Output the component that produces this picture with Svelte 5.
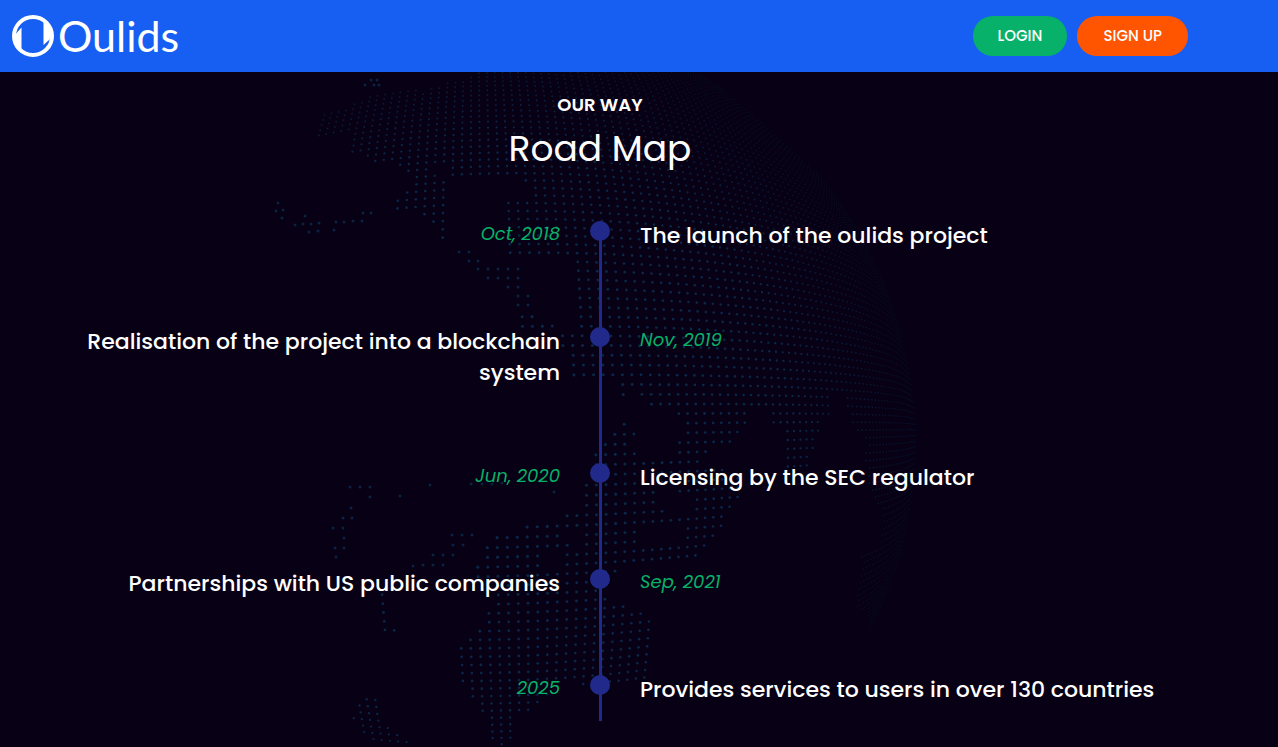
<script lang="ts">
  type Point = [number, number];

  const milestones = [
    { date: 'Oct, 2018', title: 'The launch of the oulids project' },
    { date: 'Nov, 2019', title: 'Realisation of the project into a blockchain system' },
    { date: 'Jun, 2020', title: 'Licensing by the SEC regulator' },
    { date: 'Sep, 2021', title: 'Partnerships with US public companies' },
    { date: '2025', title: 'Provides services to users in over 130 countries' },
  ];

  // ---- GLOBE ----
  const CENTER: Point = [495, 370];
  const RADIUS = 432;
  const SPACING = 10.2;
  const TILT = -0.022;

  // coastlines, in the coordinates of the globe drawing
  const land: Point[][] = [
    [
      [314, 59], [322, 43], [338, 36], [358, 31], [376, 20], [427, 18], [440, 12], [457, 8],
      [474, 5], [481, -4], [700, -4], [930, 200], [940, 400], [930, 500], [868, 566], [870, 530],
      [880, 473], [883, 440], [872, 425], [864, 386], [868, 367], [856, 361], [846, 334],
      [844, 322], [833, 322], [830, 343], [820, 350], [819, 362], [814, 379], [808, 400],
      [786, 400], [785, 359], [772, 350], [764, 337], [750, 333], [748, 350], [740, 361],
      [736, 371], [712, 375], [700, 396], [682, 396], [674, 382], [681, 356], [688, 345],
      [672, 342], [646, 334], [634, 322], [622, 325], [622, 336], [616, 336], [614, 312],
      [600, 308], [575, 314], [566, 292], [558, 262], [516, 262], [516, 240], [532, 240],
      [572, 260], [572, 220], [573, 142], [544, 140], [530, 125], [502, 124], [502, 128],
      [528, 128], [530, 110], [520, 108], [502, 107], [497, 101], [474, 106], [452, 106],
      [449, 95], [430, 96], [438, 102], [448, 108], [446, 164], [454, 167], [438, 168],
      [432, 152], [414, 138], [386, 137], [398, 124], [412, 113], [408, 104], [400, 94],
      [376, 92], [366, 86], [350, 82], [354, 58], [340, 60], [320, 67],
    ],
    [[502, 128], [575, 128], [575, 188], [562, 188], [546, 186], [516, 182], [502, 180]],
    [
      [618, 345], [634, 357], [634, 380], [645, 388], [682, 385], [710, 392], [745, 402],
      [738, 430], [725, 446], [717, 466], [702, 484], [652, 496], [606, 500], [600, 520],
      [620, 530], [638, 538], [655, 555], [654, 580], [643, 613], [610, 617], [564, 610],
      [540, 635], [514, 646], [512, 668], [502, 680], [490, 666], [490, 650], [478, 640],
      [468, 615], [457, 602], [456, 582], [468, 562], [484, 546], [494, 525], [482, 506],
      [450, 502], [484, 492], [482, 478], [500, 460], [552, 448], [584, 436], [588, 395],
      [600, 375], [612, 365],
    ],
    [[372, 514], [390, 514], [394, 556], [404, 564], [378, 566]],
    [[366, 620], [380, 622], [384, 648], [410, 673], [378, 673], [350, 648]],
    [[862, 482], [930, 450], [900, 540], [872, 570], [868, 536], [855, 538]],
  ];

  const lakes: Point[][] = [
    [[545, 480], [562, 474], [566, 500], [548, 503]],
    [[564, 458], [583, 460], [583, 474], [566, 472]],
    [[640, 458], [688, 455], [680, 468], [640, 474]],
    [[716, 385], [744, 380], [742, 392], [720, 392]],
    [[657, 433], [664, 410], [694, 430], [694, 445], [672, 446]],
  ];

  // small islands, one dot each
  const islets: Point[] = [
    [365, 13], [371, 8], [377, 8], [374, 13], [379, 13],
    [278, 131], [276, 139], [283, 138], [282, 146], [295, 153], [303, 152], [311, 152],
    [319, 151], [305, 144], [309, 160], [318, 159], [334, 158], [336, 150], [344, 150],
    [353, 149], [362, 149], [363, 141], [371, 141],
    [459, 180], [469, 180], [469, 189], [478, 189], [478, 197], [488, 197], [498, 197],
    [508, 197], [518, 197], [488, 206], [498, 206], [508, 206], [518, 206], [508, 215],
    [518, 215], [518, 224], [528, 224], [518, 233], [528, 233],
    [350, 415], [360, 415], [370, 415], [370, 425], [351, 436], [343, 446], [352, 446],
    [333, 456], [343, 456], [344, 466], [335, 476], [344, 476], [336, 485],
    [400, 424], [430, 413], [471, 412], [482, 412], [492, 412], [502, 411], [554, 420],
    [452, 463], [462, 463], [472, 463], [453, 473], [463, 473], [433, 483], [443, 483],
    [453, 483], [413, 494], [423, 493], [433, 493], [443, 493],
  ];

  function inside([x, y]: Point, shape: Point[]) {
    let hit = false;
    for (let i = 0, j = shape.length - 1; i < shape.length; j = i++) {
      const [xi, yi] = shape[i];
      const [xj, yj] = shape[j];
      if (yi > y !== yj > y && x < ((xj - xi) * (y - yi)) / (yj - yi) + xi) hit = !hit;
    }
    return hit;
  }

  // bends a flat lattice of dots over the sphere and keeps those on land
  function buildDots() {
    const dots = [];
    for (let u = -90; u <= 90; u++) {
      for (let v = -90; v <= 90; v++) {
        const a = u * SPACING;
        const b = (v + 0.5) * SPACING;
        const angle = Math.hypot(a, b) / RADIUS;
        if (angle > 1.8) continue;
        const reach = 0.5 * Math.tanh(angle) + 0.5 * Math.sin(Math.min(angle, Math.PI / 2));
        const bend = reach / angle;
        const x = CENTER[0] + (a * Math.cos(TILT) - b * Math.sin(TILT)) * bend;
        const y = CENTER[1] + (a * Math.sin(TILT) + b * Math.cos(TILT)) * bend;
        const p: Point = [x, y];
        if (!land.some((s) => inside(p, s)) || lakes.some((s) => inside(p, s))) continue;
        const depth = 1 - reach * reach;
        dots.push({ x, y, r: 0.7 + depth * 0.9, alpha: Math.min(1, 0.1 + depth * 1.8) });
      }
    }
    for (const [x, y] of islets) dots.push({ x, y, r: 1.5, alpha: 0.9 });
    return dots;
  }

  const dots = buildDots();
</script>

<header>
  <div class="bar">
    <a class="logo" href="/" aria-label="Oulids">
      <svg width="42" height="42" viewBox="0 0 42 42" aria-hidden="true">
        <circle cx="21" cy="21" r="19" fill="none" stroke="#fff" stroke-width="4" />
        <path d="M2 21 5 17.5 9.5 12.5V35L4 31ZM31.5 6V30L36.5 25.5 40 22 38 12Z" fill="#fff" />
      </svg>
      <span>Oulids</span>
    </a>
    <nav>
      <a class="btn login" href="/login">LOGIN</a>
      <a class="btn signup" href="/signup">SIGN UP</a>
    </nav>
  </div>
</header>

<main>
  <svg class="globe" width="960" height="675" viewBox="0 0 960 675" aria-hidden="true">
    {#each dots as dot}
      <circle cx={dot.x} cy={dot.y} r={dot.r} opacity={dot.alpha} />
    {/each}
  </svg>

  <section>
    <h4>OUR WAY</h4>
    <h2>Road Map</h2>
    <ol>
      {#each milestones as item, i}
        <li class:flip={i % 2 === 1}>
          <time>{item.date}</time>
          <h3>{item.title}</h3>
        </li>
      {/each}
    </ol>
  </section>
</main>

<style>
  :global(body) {
    background: #080014;
    font-family: Poppins, Inter, sans-serif;
    color: #fff;
  }
  header {
    background: #175ff2;
  }
  .bar {
    max-width: 1200px;
    height: 72px;
    padding: 0 12px;
    box-sizing: border-box;
    display: flex;
    align-items: center;
    justify-content: space-between;
  }
  .logo {
    display: flex;
    align-items: center;
    gap: 4px;
    color: #fff;
    text-decoration: none;
    font-family: Lato, sans-serif;
    font-size: 43px;
    line-height: 48px;
  }
  nav {
    display: flex;
    gap: 10px;
  }
  .btn {
    padding: 0 25px;
    border-radius: 20px;
    color: #fff;
    font-size: 15px;
    font-weight: 500;
    line-height: 40px;
    text-decoration: none;
  }
  .login {
    background: #07b169;
  }
  .signup {
    padding: 0 26px;
    background: #ff5500;
  }
  main {
    position: relative;
    overflow: hidden;
  }
  .globe {
    position: absolute;
    top: 0;
    left: 0;
    fill: #0b2748;
  }
  section {
    position: relative;
    max-width: 1200px;
    padding: 20px 0 26px;
    text-align: center;
  }
  h2,
  h3,
  h4 {
    margin: 0;
  }
  h4 {
    font-size: 18px;
    font-weight: 600;
    line-height: 26px;
  }
  h2 {
    margin-top: 6px;
    font-size: 36px;
    font-weight: 400;
    line-height: 50px;
  }
  ol {
    position: relative;
    margin: 46px 0 0;
    padding: 0;
    list-style: none;
  }
  ol::before {
    content: '';
    position: absolute;
    top: 10px;
    bottom: 0;
    left: calc(50% - 1px);
    width: 3px;
    background: #212a8a;
  }
  li {
    position: relative;
    display: grid;
    grid-template-columns: 1fr 1fr;
    column-gap: 80px;
    padding: 1px 40px 74px;
  }
  li:last-child {
    padding-bottom: 15px;
  }
  li::before {
    content: '';
    position: absolute;
    top: 1px;
    left: calc(50% - 10px);
    width: 20px;
    height: 20px;
    border-radius: 50%;
    background: #212a8a;
  }
  time {
    grid-row: 1;
    text-align: right;
    color: #07b169;
    font-size: 18px;
    font-style: italic;
    line-height: 26px;
  }
  h3 {
    grid-row: 1;
    text-align: left;
    font-size: 22px;
    font-weight: 500;
    line-height: 1.4;
  }
  .flip time {
    grid-column: 2;
    text-align: left;
  }
  .flip h3 {
    grid-column: 1;
    text-align: right;
  }
</style>
